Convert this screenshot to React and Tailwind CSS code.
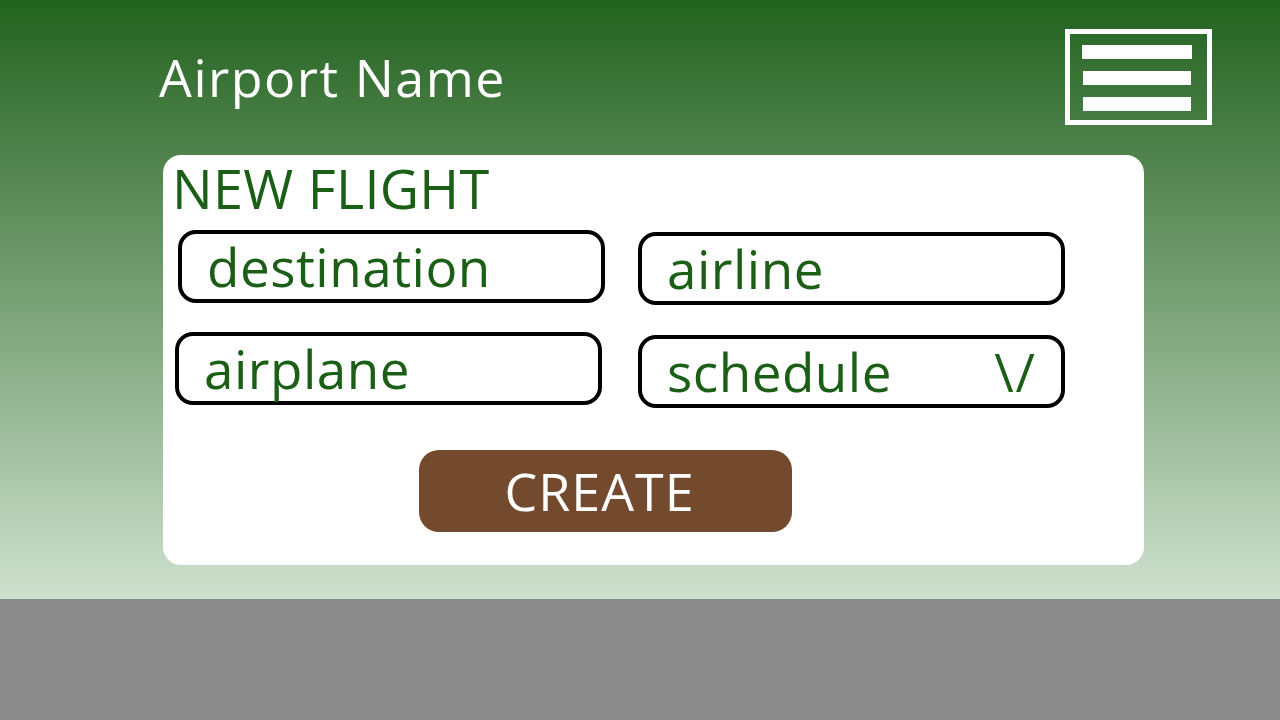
import React from 'react'

const GREEN_TEXT = 'text-[#1b5e16]'

const Field = ({ label, chevron = false, className = '' }) => (
  <div
    className={[
      'h-[73px] w-[427px] rounded-[18px] border-4 border-black bg-white flex items-center justify-between pl-[25px] pr-[24px]',
      className,
    ].join(' ')}
  >
    <span className={`${GREEN_TEXT} text-[53px] leading-none tracking-[0.5px]`}>{label}</span>
    {chevron && <span className={`${GREEN_TEXT} text-[53px] leading-none tracking-[2px]`}>\/</span>}
  </div>
)

export default function App() {
  return (
    <div className="w-[1280px] h-[720px] flex flex-col font-['Open_Sans',sans-serif]">
      <main className="h-[599px] bg-gradient-to-b from-[#21631e] to-[#cfe1cf] flex flex-col">
        {/* Header */}
        <header className="flex items-start justify-between pl-[159px] pr-[68px] pt-[29px]">
          <h1 className="text-white text-[52px] leading-none mt-[22px] tracking-[1.5px]">Airport Name</h1>
          <button
            aria-label="menu"
            className="w-[147px] h-[96px] border-[5px] border-white flex flex-col items-center justify-center gap-[12px] pt-[2px] pr-[4px]"
          >
            <span className="block w-[110px] h-[14px] bg-white" />
            <span className="block w-[108px] h-[14px] bg-white" />
            <span className="block w-[108px] h-[14px] bg-white" />
          </button>
        </header>

        {/* New flight card */}
        <section className="ml-[163px] mt-[30px] w-[981px] h-[410px] bg-white rounded-[18px] pt-[6px] px-[9px]">
          <h2 className={`${GREEN_TEXT} text-[54px] leading-none tracking-[0.3px]`}>NEW FLIGHT</h2>
          <div className="grid grid-cols-[427px_427px] gap-x-[33px] gap-y-[29px] mt-[15px] ml-[6px]">
            <Field label="destination" />
            <Field label="airline" className="mt-[2px]" />
            <Field label="airplane" className="-ml-[3px] -mt-[2px]" />
            <Field label="schedule" chevron className="mt-[1px]" />
          </div>
          <div className="mt-[42px] ml-[247px]">
            <button className="w-[373px] h-[82px] rounded-[20px] bg-[#744a2e] text-white text-[52px] leading-none tracking-[1px] pr-[12px]">
              CREATE
            </button>
          </div>
        </section>
      </main>
      <footer className="flex-1 bg-[#8b8b8b]" />
    </div>
  )
}
